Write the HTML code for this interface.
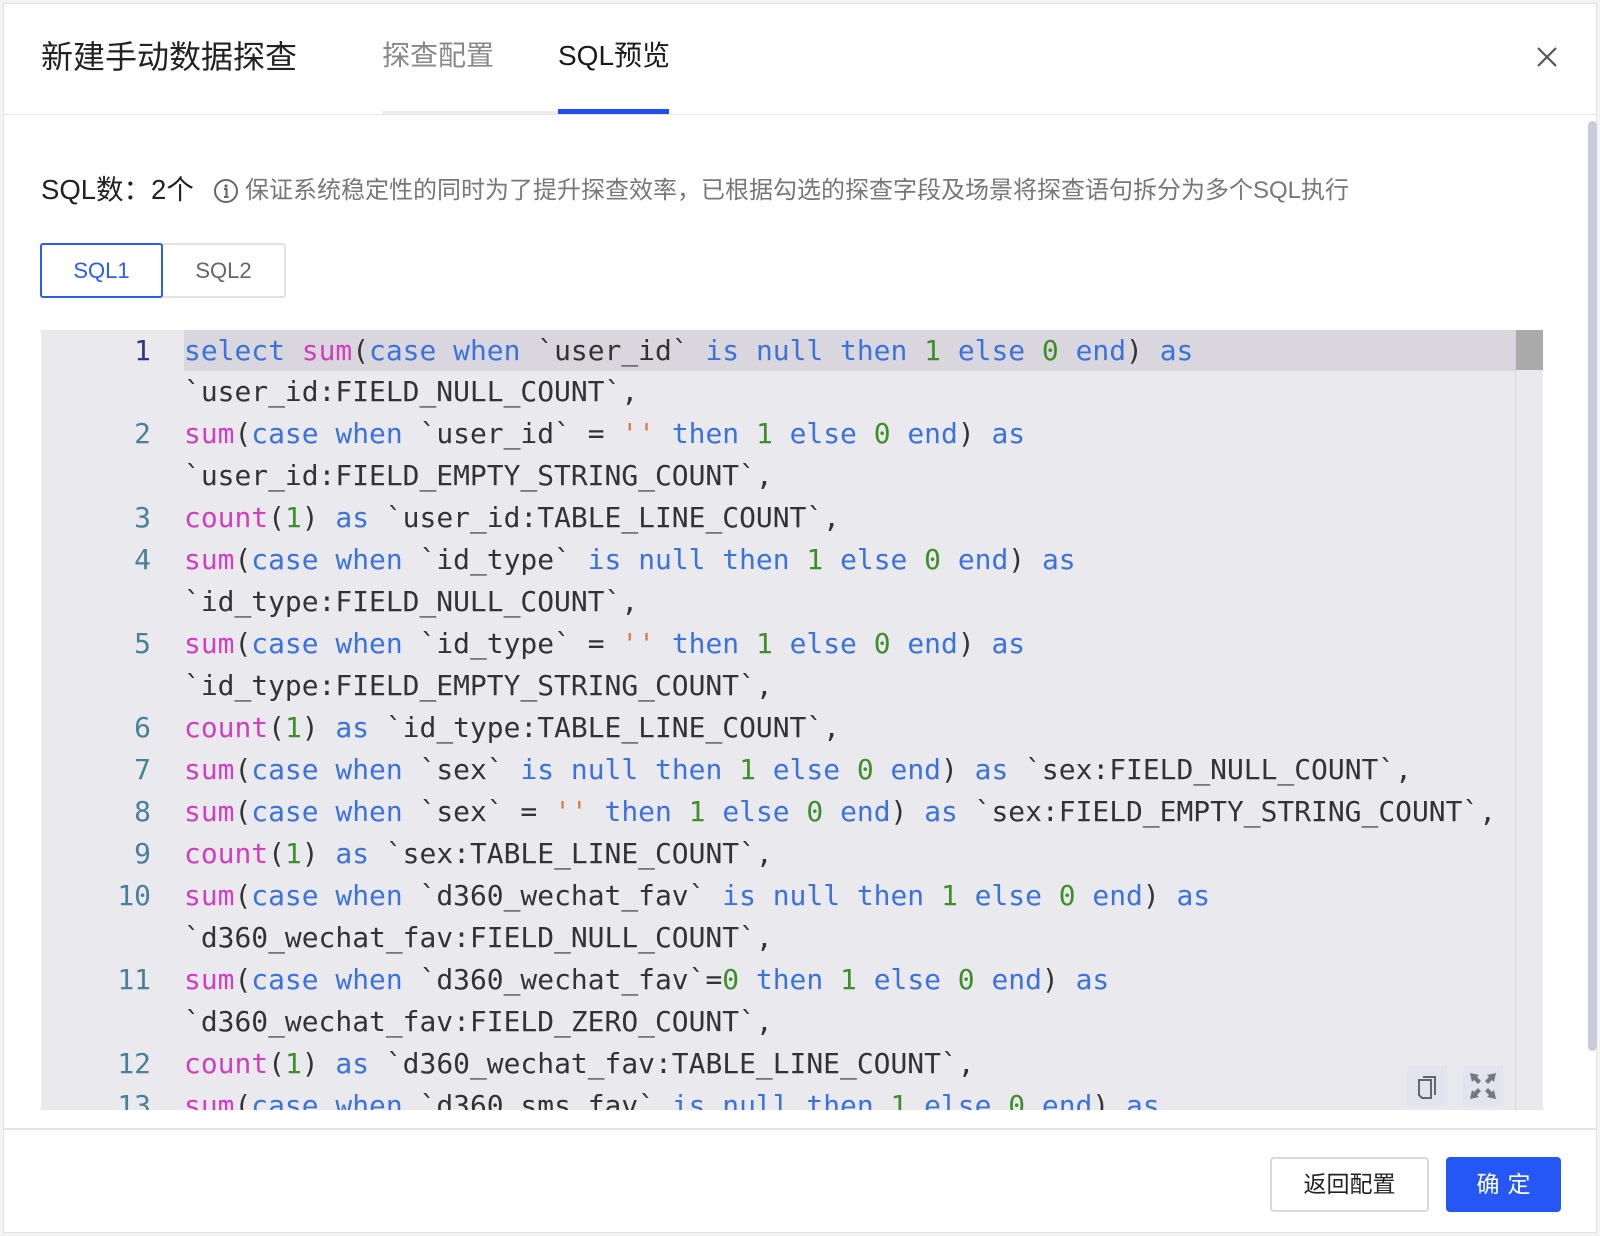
<!DOCTYPE html>
<html><head><meta charset="utf-8"><style>
*{margin:0;padding:0;box-sizing:border-box}
body{width:1600px;height:1236px;background:#f3f3f3;position:relative;overflow:hidden;font-family:"Liberation Sans","Noto Sans CJK SC",sans-serif}
.dlg{position:absolute;left:3px;top:3px;width:1594px;height:1230px;background:#fff;border:1px solid #e2e2e2}
.a{position:absolute}
.code{position:absolute;left:41px;top:330px;width:1502px;height:780px;background:#eae9ee;overflow:hidden}
.row{position:absolute;left:0;height:42px;line-height:42px;width:1474px;font-family:"DejaVu Sans Mono",monospace;font-size:27.95px;color:#333;white-space:pre}
.row .n{position:absolute;left:0;width:110px;text-align:right;color:#4a8099}
.row .t{position:absolute;left:143px}
.k{color:#3b72dc}.f{color:#d03fc0}.g{color:#3e8e2c}.s{color:#e07a45}
</style></head><body>
<div class="dlg">
<div class="a" style="left:37px;top:33px;font-size:32px;color:#222;line-height:40px">新建手动数据探查</div>
<div class="a" style="left:378px;top:33px;font-size:28px;color:#888;line-height:38px">探查配置</div>
<div class="a" style="left:554px;top:33px;font-size:28px;color:#1a1a1a;line-height:38px">SQL预览</div>
<div class="a" style="left:378px;top:107px;width:176px;height:3px;background:#ececec"></div>
<div class="a" style="left:554px;top:105px;width:111px;height:5px;background:#1f4ef2"></div>
<div class="a" style="left:0;top:110px;width:1592px;height:1px;background:#e6e6e6"></div>
<svg class="a" style="left:1532px;top:42px" width="22" height="22" viewBox="0 0 22 22"><path d="M2 2L20 20M20 2L2 20" stroke="#555" stroke-width="2.2"/></svg>
<div class="a" style="left:1584px;top:117px;width:9px;height:930px;background:#c9ccd7;border-radius:5px"></div>
<div class="a" style="left:37px;top:168px;font-size:27.5px;color:#222;line-height:36px">SQL数：2个</div>
<svg class="a" style="left:209px;top:174px" width="26" height="26" viewBox="0 0 26 26"><circle cx="13" cy="13" r="11" fill="none" stroke="#666" stroke-width="2"/><circle cx="13" cy="8" r="1.6" fill="#666"/><path d="M11 11h2.5v8M11 19h4.5" stroke="#666" stroke-width="2" fill="none"/></svg>
<div class="a" style="left:241px;top:170px;font-size:24px;color:#777;line-height:34px">保证系统稳定性的同时为了提升探查效率，已根据勾选的探查字段及场景将探查语句拆分为多个SQL执行</div>
<div class="a" style="left:36px;top:239px;width:123px;height:55px;border:2px solid #2b5df0;border-radius:3px;color:#2b5df0;font-size:22px;text-align:center;line-height:51px;z-index:2">SQL1</div>
<div class="a" style="left:157px;top:239px;width:125px;height:55px;border:2px solid #e2e2e2;border-radius:3px;color:#666;font-size:22px;text-align:center;line-height:51px">SQL2</div>
</div>
<div class="code">
<div class="a" style="left:143px;top:0;width:1331px;height:41px;background:#d9d7dd"></div>
<div class="a" style="left:1474px;top:0;width:1px;height:780px;background:#d6d6da"></div>
<div class="a" style="left:1475px;top:0;width:27px;height:40px;background:#aaa"></div>
<div class="row" style="top:0"><span class="n" style="color:#2c3a7e">1</span><span class="t"><span class="k">select</span> <span class="f">sum</span>(<span class="k">case</span> <span class="k">when</span> `user_id` <span class="k">is</span> <span class="k">null</span> <span class="k">then</span> <span class="g">1</span> <span class="k">else</span> <span class="g">0</span> <span class="k">end</span>) <span class="k">as</span></span></div>
<div class="row" style="top:41px"><span class="t">`user_id:FIELD_NULL_COUNT`,</span></div>
<div class="row" style="top:83px"><span class="n">2</span><span class="t"><span class="f">sum</span>(<span class="k">case</span> <span class="k">when</span> `user_id` = <span class="s">''</span> <span class="k">then</span> <span class="g">1</span> <span class="k">else</span> <span class="g">0</span> <span class="k">end</span>) <span class="k">as</span></span></div>
<div class="row" style="top:125px"><span class="t">`user_id:FIELD_EMPTY_STRING_COUNT`,</span></div>
<div class="row" style="top:167px"><span class="n">3</span><span class="t"><span class="f">count</span>(<span class="g">1</span>) <span class="k">as</span> `user_id:TABLE_LINE_COUNT`,</span></div>
<div class="row" style="top:209px"><span class="n">4</span><span class="t"><span class="f">sum</span>(<span class="k">case</span> <span class="k">when</span> `id_type` <span class="k">is</span> <span class="k">null</span> <span class="k">then</span> <span class="g">1</span> <span class="k">else</span> <span class="g">0</span> <span class="k">end</span>) <span class="k">as</span></span></div>
<div class="row" style="top:251px"><span class="t">`id_type:FIELD_NULL_COUNT`,</span></div>
<div class="row" style="top:293px"><span class="n">5</span><span class="t"><span class="f">sum</span>(<span class="k">case</span> <span class="k">when</span> `id_type` = <span class="s">''</span> <span class="k">then</span> <span class="g">1</span> <span class="k">else</span> <span class="g">0</span> <span class="k">end</span>) <span class="k">as</span></span></div>
<div class="row" style="top:335px"><span class="t">`id_type:FIELD_EMPTY_STRING_COUNT`,</span></div>
<div class="row" style="top:377px"><span class="n">6</span><span class="t"><span class="f">count</span>(<span class="g">1</span>) <span class="k">as</span> `id_type:TABLE_LINE_COUNT`,</span></div>
<div class="row" style="top:419px"><span class="n">7</span><span class="t"><span class="f">sum</span>(<span class="k">case</span> <span class="k">when</span> `sex` <span class="k">is</span> <span class="k">null</span> <span class="k">then</span> <span class="g">1</span> <span class="k">else</span> <span class="g">0</span> <span class="k">end</span>) <span class="k">as</span> `sex:FIELD_NULL_COUNT`,</span></div>
<div class="row" style="top:461px"><span class="n">8</span><span class="t"><span class="f">sum</span>(<span class="k">case</span> <span class="k">when</span> `sex` = <span class="s">''</span> <span class="k">then</span> <span class="g">1</span> <span class="k">else</span> <span class="g">0</span> <span class="k">end</span>) <span class="k">as</span> `sex:FIELD_EMPTY_STRING_COUNT`,</span></div>
<div class="row" style="top:503px"><span class="n">9</span><span class="t"><span class="f">count</span>(<span class="g">1</span>) <span class="k">as</span> `sex:TABLE_LINE_COUNT`,</span></div>
<div class="row" style="top:545px"><span class="n">10</span><span class="t"><span class="f">sum</span>(<span class="k">case</span> <span class="k">when</span> `d360_wechat_fav` <span class="k">is</span> <span class="k">null</span> <span class="k">then</span> <span class="g">1</span> <span class="k">else</span> <span class="g">0</span> <span class="k">end</span>) <span class="k">as</span></span></div>
<div class="row" style="top:587px"><span class="t">`d360_wechat_fav:FIELD_NULL_COUNT`,</span></div>
<div class="row" style="top:629px"><span class="n">11</span><span class="t"><span class="f">sum</span>(<span class="k">case</span> <span class="k">when</span> `d360_wechat_fav`=<span class="g">0</span> <span class="k">then</span> <span class="g">1</span> <span class="k">else</span> <span class="g">0</span> <span class="k">end</span>) <span class="k">as</span></span></div>
<div class="row" style="top:671px"><span class="t">`d360_wechat_fav:FIELD_ZERO_COUNT`,</span></div>
<div class="row" style="top:713px"><span class="n">12</span><span class="t"><span class="f">count</span>(<span class="g">1</span>) <span class="k">as</span> `d360_wechat_fav:TABLE_LINE_COUNT`,</span></div>
<div class="row" style="top:755px"><span class="n">13</span><span class="t"><span class="f">sum</span>(<span class="k">case</span> <span class="k">when</span> `d360_sms_fav` <span class="k">is</span> <span class="k">null</span> <span class="k">then</span> <span class="g">1</span> <span class="k">else</span> <span class="g">0</span> <span class="k">end</span>) <span class="k">as</span></span></div>
<div class="a" style="left:1366px;top:736px;width:40px;height:40px;background:#e2e3ee"></div>
<svg class="a" style="left:1366px;top:736px" width="40" height="40" viewBox="0 0 40 40"><path d="M16 11h12v18" fill="none" stroke="#666" stroke-width="2"/><path d="M12 14h12v18h-9l-3-3z" fill="none" stroke="#666" stroke-width="2"/></svg>
<div class="a" style="left:1422px;top:736px;width:40px;height:40px;background:#e2e3ee"></div>
<svg class="a" style="left:1422px;top:736px" width="40" height="40" viewBox="0 0 40 40" fill="#777"><path d="M7 7l9 2-2 2 4 4-3 3-4-4-2 2z"/><path d="M33 7l-2 9-2-2-4 4-3-3 4-4-2-2z"/><path d="M7 33l2-9 2 2 4-4 3 3-4 4 2 2z"/><path d="M33 33l-9-2 2-2-4-4 3-3 4 4 2-2z"/></svg>
</div>
<div class="a" style="left:4px;top:1128px;width:1592px;height:2px;background:#e4e4e4"></div>
<div class="a" style="left:1270px;top:1157px;width:159px;height:55px;border:2px solid #d9d9d9;border-radius:4px;font-size:23px;color:#222;text-align:center;line-height:51px">返回配置</div>
<div class="a" style="left:1446px;top:1157px;width:115px;height:55px;background:#2457f6;border-radius:4px;font-size:23px;color:#fff;text-align:center;line-height:55px;letter-spacing:8px;padding-left:8px">确定</div>
</body></html>
